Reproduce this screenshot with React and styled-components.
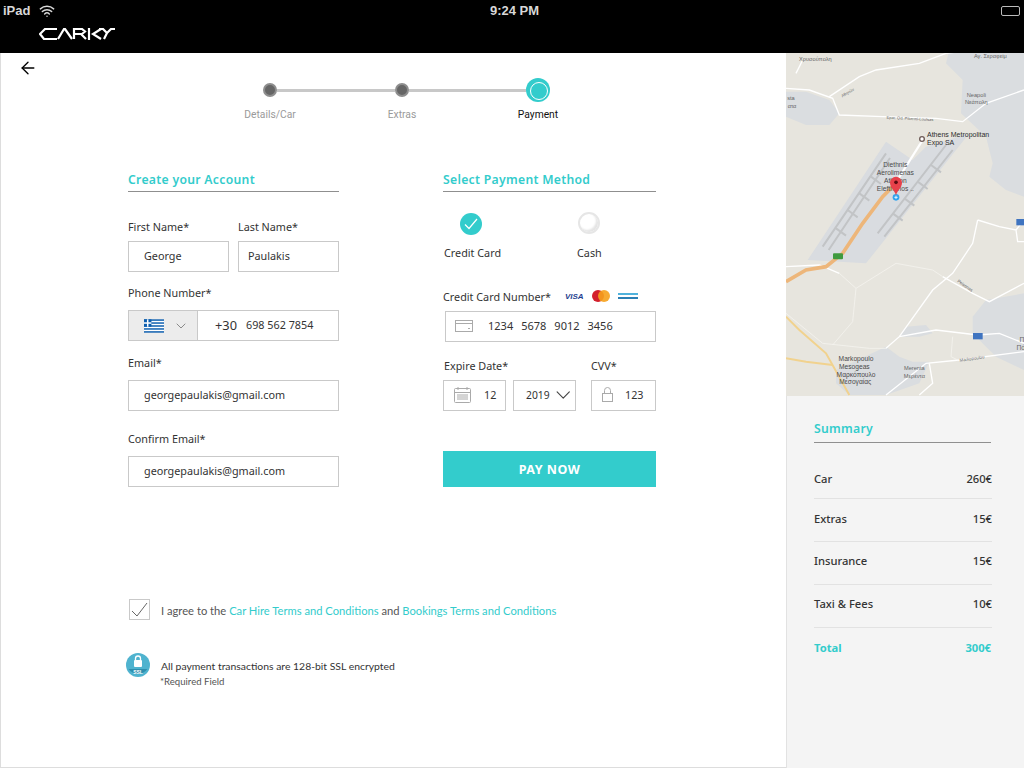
import React from 'react'
import styled, { createGlobalStyle } from 'styled-components'
import { ArrowLeft, ChevronDown, Wifi } from 'lucide-react'

const teal = '#33cccc'
const line = '#c9c9c9'

const Global = createGlobalStyle`
  html, body { margin: 0; padding: 0; background: #fff; }
  body { font-family: "Noto Sans", "Open Sans", sans-serif; color: #333; }
  * { box-sizing: border-box; }
`

const Page = styled.div`
  width: 1024px;
  height: 768px;
  display: flex;
  flex-direction: column;
  overflow: hidden;
`

const TopBar = styled.header`
  height: 53px;
  background: #000;
  color: #d8d8d8;
  display: flex;
  flex-direction: column;
`

const StatusBar = styled.div`
  height: 21px;
  padding: 0 4px 0 3px;
  display: grid;
  grid-template-columns: 1fr auto 1fr;
  align-items: center;
  font-family: "Liberation Sans", sans-serif;
  font-weight: 700;
  font-size: 13px;
`

const Carrier = styled.div`
  display: flex;
  align-items: center;
  gap: 9px;
`

const Clock = styled.span`
  padding-left: 6px;
`

const Battery = styled.div`
  justify-self: end;
  width: 19px;
  height: 10px;
  border: 1px solid #bbb;
  border-radius: 2px;
`

const LogoRow = styled.div`
  padding: 7px 0 0 39px;
  line-height: 0;
`

const Body = styled.div`
  flex: 1;
  display: flex;
  min-height: 0;
`

const Main = styled.main`
  width: 786px;
  border-left: 1px solid #ddd;
  border-bottom: 1px solid #ddd;
  position: relative;
`

const Back = styled.div`
  position: absolute;
  left: 17px;
  top: 5px;
  color: #000;
  line-height: 0;
`

const Track = styled.div`
  display: flex;
  align-items: center;
  margin: 25px 0 0 262px;
  width: 287px;
  height: 24px;
`

const Dot = styled.span`
  width: 14px;
  height: 14px;
  border-radius: 50%;
  background: #666;
  border: 2px solid #8e8e8e;
  flex: none;
`

const Current = styled.span`
  width: 24px;
  height: 24px;
  border-radius: 50%;
  background: ${teal};
  flex: none;
  padding: 4px;
  &::after {
    content: '';
    display: block;
    width: 16px;
    height: 16px;
    border-radius: 50%;
    border: 1px solid #fff;
  }
`

const Connector = styled.span`
  flex: 1;
  height: 3px;
  background: #c8c8c8;
`

const StepLabels = styled.div`
  display: flex;
  margin: 6px 0 0 219px;
`

const StepLabel = styled.span`
  width: 100px;
  text-align: center;
  font-family: Roboto, sans-serif;
  font-size: 10.3px;
  line-height: 14px;
  color: ${p => (p.$on ? '#111' : '#9a9a9a')};
  margin-right: ${p => p.$gap || 0}px;
`

const Columns = styled.div`
  display: grid;
  grid-template-columns: 211px 213px;
  column-gap: 104px;
  margin: 48px 0 0 127px;
`

const Column = styled.section`
  display: flex;
  flex-direction: column;
`

const Heading = styled.h2`
  margin: 0;
  height: 22px;
  font-size: 12.2px;
  line-height: 20px;
  font-weight: 600;
  letter-spacing: 0.3px;
  color: ${teal};
  border-bottom: 1px solid #8f8f8f;
`

const Label = styled.label`
  display: flex;
  align-items: center;
  height: 16px;
  white-space: nowrap;
  font-size: 10.8px;
  color: #333;
  margin-top: ${p => p.$top || 0}px;
  margin-bottom: ${p => p.$bottom || 10}px;
  margin-left: ${p => p.$left || 0}px;
`

const Pair = styled.div`
  display: grid;
  grid-template-columns: ${p => p.$cols};
  column-gap: ${p => p.$gap}px;
`

const Field = styled.div`
  height: 31px;
  border: 1px solid ${line};
  display: flex;
  align-items: center;
  white-space: nowrap;
  font-size: 10.8px;
  color: #333;
  padding-left: ${p => p.$pad ?? 15}px;
  padding-bottom: 2px;
  margin-left: ${p => p.$left || 0}px;
`

const FlagBox = styled.div`
  width: 69px;
  height: 29px;
  margin-top: 2px;
  background: #ececec;
  border-right: 1px solid ${line};
  display: flex;
  align-items: center;
  gap: 9px;
  padding-left: 15px;
  color: #666;
`

const Dial = styled.span`
  font-size: 12.8px;
  margin: 0 9px 0 17px;
`

const Methods = styled.div`
  display: grid;
  grid-template-columns: 134px 1fr;
  height: 96px;
  padding-top: 20px;
`

const Method = styled.div`
  display: flex;
  flex-direction: column;
  font-size: 10.8px;
`

const Radio = styled.span`
  width: 22px;
  height: 22px;
  border-radius: 50%;
  margin: ${p => (p.$on ? '1px 0 0 17px' : '0 0 0 1px')};
  margin-bottom: ${p => (p.$on ? 10 : 11)}px;
  display: flex;
  align-items: center;
  justify-content: center;
  background: ${p => (p.$on ? teal : '#fff')};
  border: ${p => (p.$on ? 'none' : '2px solid #e6e6e6')};
  box-shadow: ${p => (p.$on ? 'none' : 'inset -2px -2px 2px #e4e4e4')};
`

const MethodName = styled.span`
  line-height: 16px;
  padding-left: ${p => p.$left || 0}px;
`

const Cards = styled.span`
  display: flex;
  align-items: center;
  margin-left: 14px;
  gap: 8px;
`

const Visa = styled.span`
  font-family: "Liberation Sans", sans-serif;
  font-style: italic;
  font-weight: 700;
  font-size: 8px;
  color: #1f3f8f;
`

const Digits = styled.span`
  margin-right: 8px;
  font-size: 11px;
`

const Year = styled.span`
  font-size: 10.3px;
  margin-right: 1px;
`

const Icon = styled.span`
  display: flex;
  margin-right: ${p => p.$right || 0}px;
  color: #aaa;
`

const PayButton = styled.button`
  height: 36px;
  margin-top: 40px;
  border: none;
  background: ${teal};
  color: #fff;
  font-family: inherit;
  font-weight: 700;
  font-size: 12.5px;
  letter-spacing: 0.5px;
`

const Agree = styled.div`
  display: flex;
  align-items: center;
  margin: 112px 0 0 128px;
  font-family: Lato, sans-serif;
  font-size: 11.2px;
  color: #555;
`

const AgreeText = styled.span`
  padding-top: 2px;
`

const CheckBox = styled.span`
  width: 21px;
  height: 21px;
  border: 1px solid ${line};
  margin-right: 11px;
  display: flex;
  align-items: center;
  justify-content: center;
`

const Link = styled.a`
  color: ${teal};
`

const Secure = styled.div`
  display: flex;
  align-items: center;
  margin: 33px 0 0 125px;
  font-family: Lato, sans-serif;
  font-size: 10.4px;
  color: #333;
  gap: 11px;
`

const Required = styled.div`
  margin: 0 0 0 159px;
  font-family: Lato, sans-serif;
  font-size: 9.6px;
  line-height: 10px;
  color: #555;
`

const Aside = styled.aside`
  width: 238px;
  display: flex;
  flex-direction: column;
  background: #f4f4f4;
`

const MapPanel = styled.div`
  height: 343px;
  line-height: 0;
`

const Summary = styled.div`
  flex: 1;
  border-left: 1px solid #e2e2e2;
  padding: 24px 32px 0 27px;
`

const SummaryHeading = styled(Heading)`
  height: 23px;
  width: 177px;
  line-height: 18px;
`

const Rows = styled.div`
  margin-top: 16px;
`

const Row = styled.div`
  display: flex;
  justify-content: space-between;
  align-items: center;
  height: ${p => p.$h}px;
  padding-bottom: ${p => p.$lift || 0}px;
  font-size: 11.2px;
  color: #333;
  font-weight: ${p => (p.$total ? 700 : 500)};
  border-bottom: ${p => (p.$total ? 'none' : '1px solid #e2e2e2')};
  ${p => p.$total && `color: ${teal}; padding-right: 1px;`}
`

function Logo () {
  return (
    <svg width='76' height='12' viewBox='0 0 76 12' fill='none' stroke='#fff' strokeWidth='2.2'>
      <path d='M18 1H6L1 6l4 5h13' />
      <path d='M19 11 25 1h1l7 10' />
      <path d='M35 11V1h8l3 2.500-3 2.500h-8M42 6l5 5' />
      <path d='M50 0v12M62 1l-8 5 8 5' />
      <path d='M60 1h4l4 4 4-4h4M68 5l-3 6' />
    </svg>
  )
}

function Flag () {
  return (
    <svg width='20' height='14' viewBox='0 0 27 18'>
      <rect width='27' height='18' fill='#0d5eaf' />
      {[2, 6, 10, 14].map(y => <rect key={y} y={y} width='27' height='2' fill='#fff' />)}
      <rect width='10' height='10' fill='#0d5eaf' />
      <rect x='4' width='2' height='10' fill='#fff' />
      <rect y='4' width='10' height='2' fill='#fff' />
    </svg>
  )
}

function CardIcon () {
  return (
    <svg width='18' height='12' viewBox='0 0 18 12' fill='none' stroke='#aaa'>
      <rect x='.5' y='.5' width='17' height='11' />
      <path d='M1 3.500h16' />
      <path d='M13 8.500h2' />
    </svg>
  )
}

function CalendarIcon () {
  return (
    <svg width='17' height='16' viewBox='0 0 17 16' fill='none' stroke='#aaa'>
      <rect x='.5' y='1.500' width='16' height='14' rx='1' />
      <path d='M1 5.500h15M3 8h11M3 10h11M3 12h11M4 0v3M13 0v3' />
    </svg>
  )
}

function LockIcon () {
  return (
    <svg width='11' height='15' viewBox='0 0 11 15' fill='none' stroke='#aaa'>
      <rect x='.5' y='6.500' width='10' height='8' />
      <path d='M2.500 6.500V3.500a3 3 0 0 1 6 0v3' />
    </svg>
  )
}

function MasterCard () {
  return (
    <svg width='18' height='12' viewBox='0 0 18 12'>
      <circle cx='6' cy='6' r='6' fill='#d3202c' />
      <circle cx='12' cy='6' r='6' fill='#f6a11c' fillOpacity='.9' />
    </svg>
  )
}

function Amex () {
  return (
    <svg width='20' height='8' viewBox='0 0 20 8'>
      <rect y='1' width='20' height='2' fill='#4fb2dc' />
      <rect y='5' width='20' height='2' fill='#2b7fb4' />
    </svg>
  )
}

function SslBadge () {
  return (
    <svg width='24' height='24' viewBox='0 0 24 24'>
      <circle cx='12' cy='12' r='12' fill='#4fb3cf' />
      <rect x='8' y='7' width='8' height='7' rx='1' fill='#fff' />
      <path d='M9.500 7V5.500a2.500 2.500 0 0 1 5 0V7' fill='none' stroke='#fff' strokeWidth='1.300' />
      <path d='M2.500 16h19a12 12 0 0 1-19 0z' fill='#2e8fae' />
      <text x='12' y='20.500' fontFamily='"Liberation Sans", sans-serif' fontWeight='700' fontSize='5' fill='#fff' textAnchor='middle'>SSL</text>
    </svg>
  )
}

// map is drawn in the coordinates of a 3x crop, so strokes and fonts are 3x too
function AirportMap () {
  return (
    <svg width='238' height='343' viewBox='0 9 714 1029'>
      <rect y='9' width='714' height='1029' fill='#e7e5de' />
      <g fill='#dadde0'>
        <path d='M490 0 480 40l50 50-5 100 75 70 20 80-10 40 50 40 54 20V0z' />
        <path d='M0 125h60l70 25 30 40-30 35H60L0 200z' />
        <path d='M714 730l-114 20-40 50v50l70 70 84 40z' />
        <path d='M360 830l60-5 20 25-40 10h-60z' />
        <path d='M150 960l150-70 40 30 40 15h50l-30 65-100 35H190l-40-35z' />
      </g>
      <path d='M300 275l80 55 40-40 130-40-310 390-175-10z' fill='#d9dce0' />
      <g fill='none' stroke='#c2c4c6' strokeWidth='6'>
        <path d='M110 590 300 310M128 600 312 324' />
        <path d='M275 550 480 285M295 560 500 300' />
        <path d='M150 535l30 22M185 480l30 22M220 430l30 22M255 380l30 22' />
        <path d='M320 490l30 22M355 445l30 22M395 395l30 22M435 345l30 22' />
      </g>
      <g fill='none' stroke='#fff' strokeWidth='4'>
        <path d='M0 115l70 5 70 25 20 50 130 5 160 5 80 10 70-55 114-40' />
        <path d='M130 140l90-60 50-20 130-20 80-30 80-10' />
        <path d='M30 70l20-40' />
        <path d='M575 510l-15 70-60 90-60 50-100 140-40 35' />
        <path d='M575 510l65 20 50 10 24-30M690 540l5 35h19' />
        <path d='M470 680l90 50 50 25 104-55' />
        <path d='M340 860l110-20 125 15 65-5 74 30' />
        <path d='M300 1035l120-95 100-10 194-25' />
        <path d='M430 940l10 60-40 35' />
        <path d='M0 650l100-5 60 25' />
      </g>
      <g fill='none' stroke='#f4f3ee' strokeWidth='2.500'>
        <path d='M210 715l120-75 110 20 30 20' />
        <path d='M0 790l110 90 140 15 50 0' />
        <path d='M160 670l50 45-10 100-60 70' />
        <path d='M500 860l-5 60 20 10' />
      </g>
      <path d='M325 405 410 270' fill='none' stroke='#fff' strokeWidth='7' />
      <path d='M0 695l60-35 60-10 50-40 60-90 60-80 30-30' fill='none' stroke='#edb67a' strokeWidth='11' />
      <path d='M0 800l40 40 80 70 70 125M0 925l60 10 80 10' fill='none' stroke='#f1d28e' strokeWidth='6' />
      <rect x='141' y='610' width='30' height='18' rx='3' fill='#3f9a3f' />
      <rect x='561' y='849' width='29' height='19' fill='#3f74c0' />
      <rect x='691' y='507' width='23' height='19' fill='#3f74c0' />
      <g fontFamily='"Liberation Sans", sans-serif' fontSize='17' fill='#666' textAnchor='middle'>
        <text x='88' y='33'>Χρυσούπολη</text>
        <text x='613' y='24'>Αγ. Σεραφείμ</text>
        <text x='571' y='140'>Neapoli</text>
        <text x='571' y='163'>Νεάπολη</text>
        <text x='15' y='150'>sta</text>
        <text x='18' y='173'>ατα</text>
        <text x='372' y='210' fontSize='12' transform='rotate(3 372 205)'>Epar. Od. Pikermi-Loutsas</text>
        <text x='185' y='132' fontSize='12' transform='rotate(-30 185 128)'>Αθηνών</text>
        <text x='537' y='711' fontSize='13' transform='rotate(35 537 707)'>Peisonas</text>
        <text x='558' y='930' fontSize='13' transform='rotate(-8 558 925)'>Markopoulou</text>
        <text x='385' y='961'>Merenta</text>
        <text x='385' y='985'>Μερέντα</text>
        <text x='708' y='875' fontSize='20'>Π</text>
        <text x='704' y='900' fontSize='20'>Πό</text>
      </g>
      <g fontFamily='"Liberation Sans", sans-serif' fontSize='20' fill='#4a4a4a' textAnchor='middle'>
        <text x='328' y='352'>Diethnis</text>
        <text x='328' y='376'>Aerolimenas</text>
        <text x='328' y='400'>Athinon</text>
        <text x='328' y='424'>Eleftherios ..</text>
        <text x='210' y='932'>Markopoulo</text>
        <text x='205' y='957'>Mesogeas</text>
        <text x='210' y='980'>Μαρκόπουλο</text>
        <text x='208' y='1003'>Μεσογαίας</text>
      </g>
      <g fontFamily='"Liberation Sans", sans-serif' fontSize='21' fill='#2c2c2c'>
        <text x='423' y='261'>Athens Metropolitan</text>
        <text x='423' y='285'>Expo SA</text>
      </g>
      <circle cx='408' cy='267' r='7' fill='#fff' stroke='#6d5a56' strokeWidth='4' />
      <circle cx='330' cy='442' r='10' fill='#2fa4ef' />
      <path d='M325 442h10M330 437v10' stroke='#fff' strokeWidth='2.500' />
      <path d='M330 437c-3-16-18-24-18-39a18 18 0 0 1 36 0c0 15-15 23-18 39z' fill='#e7414a' />
      <circle cx='330' cy='397' r='5.500' fill='#5a0b10' />
    </svg>
  )
}

export default function App () {
  return (
    <Page>
      <Global />
      <TopBar>
        <StatusBar>
          <Carrier>iPad <Wifi size={16} strokeWidth={2.2} /></Carrier>
          <Clock>9:24 PM</Clock>
          <Battery />
        </StatusBar>
        <LogoRow><Logo /></LogoRow>
      </TopBar>
      <Body>
        <Main>
          <Back><ArrowLeft size={20} strokeWidth={1.6} /></Back>
          <Track>
            <Dot />
            <Connector />
            <Dot />
            <Connector />
            <Current />
          </Track>
          <StepLabels>
            <StepLabel $gap={32}>Details/Car</StepLabel>
            <StepLabel $gap={36}>Extras</StepLabel>
            <StepLabel $on>Payment</StepLabel>
          </StepLabels>
          <Columns>
            <Column>
              <Heading>Create your Account</Heading>
              <Pair $cols='101px 101px' $gap={9}>
                <div>
                  <Label $top={26} $bottom={7}>First Name*</Label>
                  <Field>George</Field>
                </div>
                <div>
                  <Label $top={26} $bottom={7}>Last Name*</Label>
                  <Field $pad={9}>Paulakis</Field>
                </div>
              </Pair>
              <Label $top={12}>Phone Number*</Label>
              <Field $pad={0}>
                <FlagBox><Flag /><ChevronDown size={16} strokeWidth={1.1} /></FlagBox>
                <Dial>+30</Dial>698 562 7854
              </Field>
              <Label $top={13}>Email*</Label>
              <Field>georgepaulakis@gmail.com</Field>
              <Label $top={19}>Confirm Email*</Label>
              <Field>georgepaulakis@gmail.com</Field>
            </Column>
            <Column>
              <Heading>Select Payment Method</Heading>
              <Methods>
                <Method>
                  <Radio $on>
                    <svg width='14' height='12' viewBox='0 0 14 12' fill='none' stroke='#fff' strokeWidth='1.200'><path d='M1 6.500 5 10.500 13 1' /></svg>
                  </Radio>
                  <MethodName $left={1}>Credit Card</MethodName>
                </Method>
                <Method>
                  <Radio />
                  <MethodName>Cash</MethodName>
                </Method>
              </Methods>
              <Label $bottom={7}>
                Credit Card Number*
                <Cards><Visa>VISA</Visa><MasterCard /><Amex /></Cards>
              </Label>
              <Field $left={2} $pad={9}>
                <Icon $right={15}><CardIcon /></Icon>
                <Digits>1234</Digits><Digits>5678</Digits><Digits>9012</Digits><Digits>3456</Digits>
              </Field>
              <Pair $cols='133px 65px' $gap={15}>
                <div>
                  <Label $top={15} $bottom={7} $left={1}>Expire Date*</Label>
                  <Pair $cols='63px 63px' $gap={7}>
                    <Field $pad={10}><Icon $right={13}><CalendarIcon /></Icon>12</Field>
                    <Field $pad={12}><Year>2019</Year><ChevronDown size={26} strokeWidth={1.1} color='#444' /></Field>
                  </Pair>
                </div>
                <div>
                  <Label $top={15} $bottom={7}>CVV*</Label>
                  <Field $pad={10}><Icon $right={12}><LockIcon /></Icon>123</Field>
                </div>
              </Pair>
              <PayButton>PAY NOW</PayButton>
            </Column>
          </Columns>
          <Agree>
            <CheckBox>
              <svg width='17' height='15' viewBox='0 0 17 15' fill='none' stroke='#666'><path d='M1 9l5 5L16 1' /></svg>
            </CheckBox>
            <AgreeText>I agree to the <Link>Car Hire Terms and Conditions</Link> and <Link>Bookings Terms and Conditions</Link></AgreeText>
          </Agree>
          <Secure><SslBadge /><AgreeText>All payment transactions are 128-bit SSL encrypted</AgreeText></Secure>
          <Required>*Required Field</Required>
        </Main>
        <Aside>
          <MapPanel><AirportMap /></MapPanel>
          <Summary>
            <SummaryHeading>Summary</SummaryHeading>
            <Rows>
              <Row $h={40}><span>Car</span><span>260€</span></Row>
              <Row $h={43} $lift={4}><span>Extras</span><span>15€</span></Row>
              <Row $h={43} $lift={5}><span>Insurance</span><span>15€</span></Row>
              <Row $h={43} $lift={5}><span>Taxi &amp; Fees</span><span>10€</span></Row>
              <Row $h={42} $total $lift={4}><span>Total</span><span>300€</span></Row>
            </Rows>
          </Summary>
        </Aside>
      </Body>
    </Page>
  )
}
